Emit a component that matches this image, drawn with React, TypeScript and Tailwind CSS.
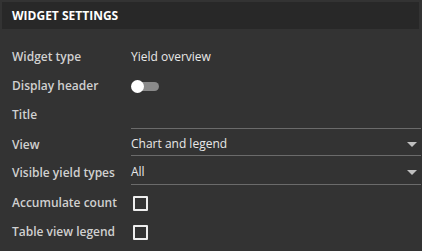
import React from "react";

const font = { fontFamily: '"Open Sans", "Noto Sans", sans-serif' };

function Row({ label, children, h, pt = "" }: { label: string; children?: React.ReactNode; h: string; pt?: string }) {
  return (
    <div className={`flex ${h}`}>
      <div className={`w-[119px] shrink-0 flex items-center text-[12px] font-semibold text-[#d0d0d0] ${pt}`}>{label}</div>
      <div className="flex-1 flex items-center h-full">{children}</div>
    </div>
  );
}

function Select({ value }: { value: string }) {
  return (
    <div className="flex-1 flex items-center justify-between h-full border-b border-[#6b6b6b] pr-[4px] pt-[4px]">
      <span className="text-[12px] text-[#e8e8e8]">{value}</span>
      <svg width="10" height="5" viewBox="0 0 10 5"><path d="M0 0h10L5 5z" fill="#c0c0c0" /></svg>
    </div>
  );
}

function Checkbox() {
  return <div className="ml-[2px] w-[15px] h-[15px] border-2 border-[#eeeeee] rounded-[1px]" />;
}

export default function App() {
  return (
    <div className="w-[422px] h-[251px] bg-[#333333] pt-[2px]" style={font}>
      <div className="ml-[2px] mr-[3px] h-[27px] bg-[#282828] flex items-center pl-[10px]">
        <span className="text-[12px] font-bold text-white">WIDGET SETTINGS</span>
      </div>
      <div className="pl-[12px] pr-[1px] pt-[13px]">
        <div className="flex items-center h-[29px]">
          <div className="w-[119px] shrink-0 text-[12px] font-semibold text-[#d0d0d0]">Widget type</div>
          <span className="text-[12px] text-[#e8e8e8]">Yield overview</span>
        </div>
        <div className="flex items-center h-[29px] pt-[1px]">
          <div className="w-[119px] shrink-0 text-[12px] font-semibold text-[#d0d0d0]">Display header</div>
          <div className="relative w-[28px] h-[13px] flex items-center">
            <div className="absolute left-[6px] right-0 h-[9px] rounded-full bg-[#8a8a8a]" />
            <div className="absolute left-0 w-[13px] h-[13px] rounded-full bg-white" />
          </div>
        </div>
        <Row label="Title" h="h-[29px]">
          <div className="flex-1 h-full border-b border-[#6b6b6b]" />
        </Row>
        <Row label="View" h="h-[27px]" pt="pt-[4px]">
          <Select value="Chart and legend" />
        </Row>
        <Row label="Visible yield types" h="h-[29px]" pt="pt-[4px]">
          <Select value="All" />
        </Row>
        <div className="pt-[4px]">
          <div className="flex items-center h-[29px]">
            <div className="w-[119px] shrink-0 text-[12px] font-semibold text-[#d0d0d0] pb-[1px]">Accumulate count</div>
            <Checkbox />
          </div>
          <div className="flex items-center h-[29px]">
            <div className="w-[119px] shrink-0 text-[12px] font-semibold text-[#d0d0d0] pb-[1px]">Table view legend</div>
            <Checkbox />
          </div>
        </div>
      </div>
    </div>
  );
}
